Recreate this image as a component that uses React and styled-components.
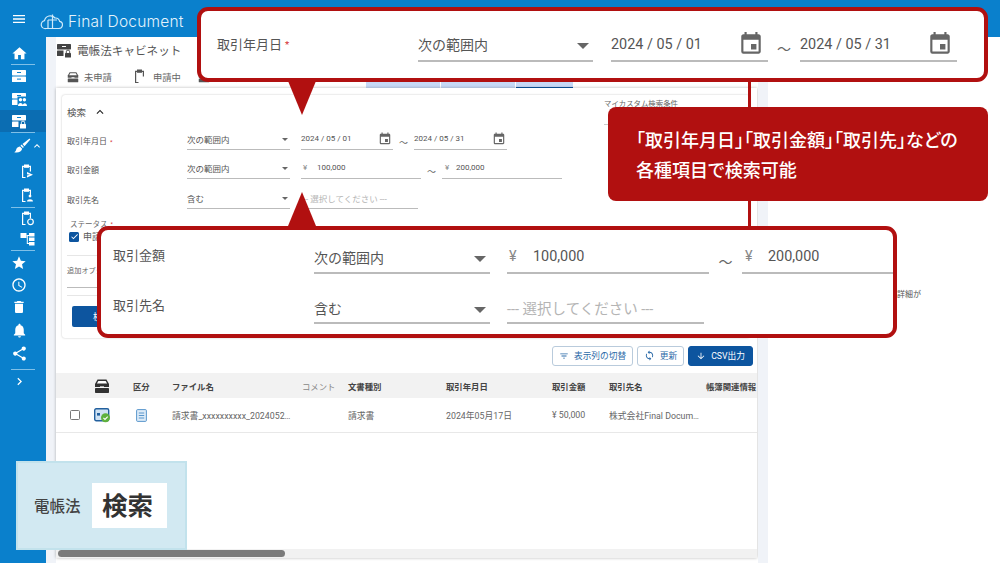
import React from 'react';
import styled, { createGlobalStyle } from 'styled-components';
import {
  MdHome, MdStar, MdAccessTime, MdDelete, MdNotifications, MdShare, MdChevronRight,
  MdKeyboardArrowUp, MdExpandLess, MdMenu, MdFilterList, MdSync, MdArrowDownward, MdCheck, MdEvent,
} from 'react-icons/md';

const RED = '#b11010';
const BLUE = '#0a80cc';
const NAVY = '#0d559f';
const FONT = '"Roboto", "Noto Sans CJK JP", sans-serif';

const GlobalStyle = createGlobalStyle`
  html, body { margin: 0; padding: 0; background: #fff; }
  body { font-family: ${FONT}; color: #444; }
  * { box-sizing: border-box; }
`;

const Page = styled.div`
  position: relative;
  width: 1000px;
  height: 563px;
  overflow: hidden;
  background: #fff;
  display: flex;
  flex-direction: column;
`;

const Header = styled.header`
  height: 37px;
  flex: none;
  background: ${BLUE};
  display: flex;
  align-items: center;
  color: #fff;
  padding-left: 11px;
`;

const Logo = styled.div`
  display: flex;
  align-items: center;
  margin: 5px 0 0 13px;
  gap: 4px;
  color: #e4f3fc;
  font-family: "Inter", sans-serif;
  font-weight: 300;
  font-size: 15.5px;
  letter-spacing: 0.2px;
`;

const Body = styled.div`
  flex: 1;
  display: flex;
  min-height: 0;
`;

const Sidebar = styled.nav`
  width: 46px;
  flex: none;
  background: ${BLUE};
  display: flex;
  flex-direction: column;
  padding-top: 5px;
  color: #fff;
`;

const NavItem = styled.div`
  height: ${p => p.$h || 22}px;
  flex: none;
  display: flex;
  align-items: center;
  justify-content: center;
  padding-left: ${p => p.$indent || 0}px;
  padding-right: ${p => (p.$indent ? 0 : 8)}px;
  background: ${p => (p.$active ? '#0b6db2' : 'transparent')};
`;

const NavRule = styled.div`
  height: 1px;
  margin: 0 11px;
  flex: none;
  background: #7fc0e8;
`;

const Gutter = styled.div`
  width: ${p => p.$w}px;
  flex: none;
  background: #f0f3f8;
`;

const Main = styled.main`
  width: 702px;
  flex: none;
  display: flex;
  flex-direction: column;
  min-height: 0;
`;

const TitleBar = styled.div`
  height: 28px;
  flex: none;
  display: flex;
  align-items: center;
  gap: 5px;
  padding-bottom: 2px;
  background: #fff;
  color: #555;
  font-size: 11.6px;
`;

const Tabs = styled.div`
  height: 23px;
  flex: none;
  display: flex;
  align-items: flex-end;
  padding-left: 11px;
  background: #fff;
`;

const Tab = styled.div`
  width: ${p => p.$w}px;
  height: ${p => (p.$blank ? 8 : 23)}px;
  flex: none;
  display: flex;
  align-items: center;
  gap: 5px;
  font-size: 9.3px;
  color: #666;
  margin-right: ${p => (p.$blank ? 1 : 0)}px;
  background: ${p => (p.$blank ? '#c7d9f6' : 'transparent')};
  border-bottom: ${p => (p.$selected ? `1px solid ${NAVY}` : 'none')};
`;

const Card = styled.section`
  flex: 1;
  width: 701px;
  min-height: 0;
  margin-bottom: 5px;
  background: #fff;
  box-shadow: 0 0 3px rgba(0, 0, 0, 0.28);
  display: flex;
  flex-direction: column;
  padding-top: 7px;
`;

const Panel = styled.div`
  margin: 0 7px 0 6px;
  height: 243px;
  flex: none;
  border-radius: 3px;
  box-shadow: 0 0 2px rgba(0, 0, 0, 0.25);
  padding: 8px 5px 0;
  display: flex;
  flex-direction: column;
`;

const PanelHead = styled.div`
  height: 17px;
  flex: none;
  display: flex;
  align-items: flex-start;
  justify-content: space-between;
`;

const PanelTitle = styled.div`
  display: flex;
  align-items: center;
  gap: 7px;
  font-size: 9.5px;
  margin-top: 2px;
  color: #555;
`;

const CustomTitle = styled.div`
  width: 141px;
  height: 28px;
  margin-top: -6px;
  font-size: 7.4px;
  color: #666;
  border-bottom: 1px solid #ccc;
`;

const FilterRow = styled.div`
  height: ${p => p.$h}px;
  flex: none;
  display: flex;
  align-items: flex-end;
`;

const RowLabel = styled.div`
  width: ${p => p.$w}px;
  flex: none;
  font-size: ${p => p.$size}px;
  line-height: 1.2;
  padding-left: ${p => p.$pl || 0}px;
  padding-bottom: ${p => p.$pb || 3}px;
  color: #555;
`;

const Required = styled.span`
  color: #d32f2f;
  margin-left: 3px;
  font-size: 0.75em;
  vertical-align: 0.15em;
`;

const Field = styled.div`
  width: ${p => p.$w}px;
  height: ${p => p.$h}px;
  margin-left: ${p => p.$ml || 0}px;
  padding-bottom: ${p => p.$pb || 0}px;
  flex: none;
  display: flex;
  align-items: center;
  justify-content: space-between;
  border-bottom: ${p => p.$line}px solid #bbb;
  font-size: ${p => p.$size}px;
  color: ${p => (p.$muted ? '#b4b4b4' : '#555')};
`;

const CalIcon = styled(MdEvent)`
  flex: none;
  color: #666;
  margin-right: ${p => p.$mr}px;
`;

const Yen = styled.span`
  width: ${p => p.$w}px;
  flex: none;
  padding-left: ${p => p.$pad}px;
  color: #888;
`;

const Amount = styled.span`
  flex: 1;
`;

const Caret = styled.span`
  flex: none;
  margin: ${p => p.$s * 0.8}px ${p => p.$s * 0.6}px 0 0;
  border-left: ${p => p.$s}px solid transparent;
  border-right: ${p => p.$s}px solid transparent;
  border-top: ${p => p.$s}px solid #666;
`;

const Tilde = styled.span`
  width: ${p => p.$w}px;
  flex: none;
  text-align: center;
  font-size: ${p => p.$size}px;
  line-height: 1.2;
  color: #666;
  padding-bottom: ${p => p.$pb}px;
`;

const StatusLabel = styled.div`
  margin: 9px 0 0 3px;
  font-size: 7.5px;
  color: #666;
`;

const StatusRow = styled.div`
  display: flex;
  align-items: center;
  gap: 4px;
  margin: 1px 0 0 2px;
  font-size: 9px;
  color: #555;
`;

const CheckBox = styled.span`
  width: 10px;
  height: 10px;
  flex: none;
  border-radius: 1.5px;
  background: ${p => (p.$on ? NAVY : '#fff')};
  border: ${p => (p.$on ? 'none' : '1.5px solid #777')};
  color: #fff;
  display: flex;
  align-items: center;
  justify-content: center;
`;

const Divider = styled.div`
  height: 1px;
  flex: none;
  background: #e6e6e6;
  margin-top: ${p => p.$mt}px;
`;

const OptionLabel = styled.div`
  margin-top: 9px;
  font-size: 7.2px;
  color: #666;
`;

const OptionInput = styled.div`
  width: 90px;
  height: 13px;
  flex: none;
  border-bottom: 1px solid #bbb;
`;

const SearchButton = styled.button`
  width: 60px;
  height: 21px;
  flex: none;
  margin: 10px 0 0 5px;
  border: none;
  border-radius: 2px;
  background: ${NAVY};
  color: #fff;
  font: 9px ${FONT};
`;

const Toolbar = styled.div`
  height: 35px;
  flex: none;
  display: flex;
  align-items: center;
  justify-content: flex-end;
  gap: 4px;
  padding: 0 4px 0 0;
`;

const ToolButton = styled.button`
  width: ${p => p.$w}px;
  height: 20px;
  display: flex;
  align-items: center;
  justify-content: center;
  gap: 5px;
  border-radius: 3px;
  border: 1px solid ${p => (p.$solid ? NAVY : '#b9cbdc')};
  background: ${p => (p.$solid ? NAVY : '#fff')};
  color: ${p => (p.$solid ? '#fff' : '#2b6aa8')};
  font: 8.7px ${FONT};
  padding: 0;
`;

const TableRow = styled.div`
  height: ${p => (p.$head ? 25 : 35)}px;
  flex: none;
  display: grid;
  grid-template-columns: 38px 39px 39px 130px 46px 98px 106px 57px 97px 51px;
  align-items: center;
  font-size: ${p => (p.$head ? 8.4 : 8.8)}px;
  white-space: nowrap;
  color: ${p => (p.$head ? '#444' : '#666')};
  font-weight: ${p => (p.$head ? 700 : 400)};
  background: ${p => (p.$head ? '#f2f2f2' : '#fff')};
  border-bottom: ${p => (p.$head ? 'none' : '1px solid #e8e8e8')};
`;

const Cell = styled.div`
  display: flex;
  align-items: center;
  padding-left: ${p => p.$pad || 0}px;
  font-weight: ${p => (p.$light ? 400 : 'inherit')};
  color: ${p => (p.$light ? '#888' : 'inherit')};
`;

const ScrollTrack = styled.div`
  height: 9px;
  margin-top: auto;
  flex: none;
  background: #f1f1f1;
  display: flex;
  align-items: center;
  padding-left: 2px;
`;

const ScrollThumb = styled.div`
  width: 227px;
  height: 7px;
  border-radius: 4px;
  background: #7b7b7b;
`;

const SidePane = styled.aside`
  flex: 1;
  background: #fff;
  font-size: 8px;
  color: #555;
  padding: 251px 0 0 129px;
`;

const Frame = styled.div`
  position: absolute;
  left: ${p => p.$left}px;
  top: ${p => p.$top}px;
  width: ${p => p.$w}px;
  height: ${p => p.$h}px;
  border: 4px solid ${RED};
  border-radius: 11px;
  background: #fff;
  overflow: hidden;
  display: flex;
  flex-direction: column;
`;

const Pointer = styled.div`
  position: absolute;
  left: 288px;
  top: ${p => p.$top}px;
  border-left: 14px solid transparent;
  border-right: 14px solid transparent;
  ${p => (p.$up ? `border-bottom: 34px solid ${RED};` : `border-top: 34px solid ${RED};`)}
`;

const Connector = styled.div`
  position: absolute;
  left: 748px;
  top: 81px;
  width: 3px;
  height: 146px;
  background: ${RED};
`;

const Note = styled.div`
  position: absolute;
  left: 608px;
  top: 107px;
  width: 380px;
  height: 94px;
  border-radius: 8px;
  background: ${RED};
  color: #fff;
  font-size: 18px;
  font-weight: 500;
  line-height: 30px;
  padding: 17px 0 0 28px;
  font-feature-settings: "palt";
  font-family: "Noto Sans CJK JP", sans-serif;
`;

const Badge = styled.div`
  position: absolute;
  left: 16px;
  top: 461px;
  width: 171px;
  height: 89px;
  background: #d2e9f2;
  border: 2px solid #c2e2ec;
  display: flex;
  align-items: center;
  gap: 11px;
  padding-left: 16px;
`;

const BadgeLabel = styled.div`
  font-size: 15.5px;
  font-weight: 500;
  color: #444;
  padding-bottom: 1px;
  font-family: "Noto Sans CJK JP", sans-serif;
`;

const BadgeWord = styled.div`
  width: 75px;
  height: 45px;
  padding: 0 3px 4px 0;
  background: #fff;
  display: flex;
  align-items: center;
  justify-content: center;
  font-size: 25.5px;
  font-weight: 700;
  color: #333;
  font-family: "Noto Sans CJK JP", sans-serif;
`;

const Cloud = () => (
  <svg width="24" height="20" viewBox="0 0 24 20" fill="none" stroke="#cfeafa" strokeWidth="1.2">
    <path d="M6 17.5h13a3.6 3.6 0 0 0 .7-7.1A4.5 4.5 0 0 0 15 7 6 6 0 0 0 4.5 9.6 4 4 0 0 0 6 17.5z" />
    <path d="M12.5 3.5v14M8 9h9M8 9v8.5" />
  </svg>
);

const Cabinet = ({ size = 16, color = '#fff', lock, people }) => (
  <svg width={size} height={size} viewBox="0 0 16 16" fill={color}>
    <rect x="1" y="2" width="14" height="5.4" rx="0.6" />
    <rect x="1" y="8.6" width="14" height="5.4" rx="0.6" />
    <rect x="6" y="4" width="4" height="1" fill={color === '#fff' ? BLUE : '#fff'} />
    {!lock && !people && <rect x="6" y="10.6" width="4" height="1" fill={BLUE} />}
    {lock && (
      <g>
        <rect x="7.5" y="8" width="8.5" height="8" fill={color === '#fff' ? '#0b6db2' : '#fff'} />
        <rect x="9" y="11" width="6" height="4.4" rx="0.5" />
        <path d="M10.3 11V9.8a1.7 1.7 0 0 1 3.4 0V11" fill="none" stroke={color} strokeWidth="0.9" />
      </g>
    )}
    {people && (
      <g>
        <rect x="6.5" y="5.5" width="9.5" height="10.5" fill={BLUE} />
        <circle cx="9.5" cy="8.8" r="1.7" />
        <circle cx="13.4" cy="8.8" r="1.7" />
        <path d="M7 15c0-4 5-4 5 0zM11.6 15c0-3.6 4.4-3.6 4.4 0z" />
      </g>
    )}
  </svg>
);

const Brush = () => (
  <svg width="18" height="18" viewBox="0 0 18 18" fill="#fff">
    <path d="M16.5 1.5l-7 5.5 2 2.2 5.8-6.6z" />
    <path d="M8.6 7.6l2.3 2.4-1 1.1-2.4-2.4zM7 9.6l2.2 2.2c-.6 2.6-3.8 4.4-8 3.4 2-.6 1.5-2 2.4-3.6.6-1 2-1.8 3.4-2z" />
  </svg>
);

const Clipboard = ({ badge, color = '#fff' }) => (
  <svg width="15" height="15" viewBox="0 0 15 15" fill="none" stroke={color} strokeWidth="1.2">
    <path d="M5.5 13.5H2.6V2.4h7.8v5" />
    <path d="M4.6 1h3.8v2.2H4.6z" fill={color} />
    {badge === 'gear' && <circle cx="10.5" cy="10.8" r="2.8" />}
    {badge === 'user' && <path d="M7 13.5c0-3 6-3 6 0zM10 9.5a1.4 1.4 0 1 0 0-2.8 1.4 1.4 0 0 0 0 2.8z" fill={color} stroke="none" />}
    {badge === 'send' && <path d="M7 13.5l6-2.7-6-2.8v2.2l3 .6-3 .6z" fill={color} stroke="none" />}
  </svg>
);

const TreeIcon = () => (
  <svg width="15" height="14" viewBox="0 0 15 14" fill="#fff">
    <rect x="0.5" y="1" width="6" height="5" />
    <rect x="9" y="1" width="5.5" height="3.5" />
    <rect x="9" y="5.5" width="5.5" height="3.5" />
    <rect x="9" y="10" width="5.5" height="3.5" />
    <path d="M6.5 3h2.5v1H7.8v7H9v1H6.8V4H6.5z" />
  </svg>
);

const Tray = ({ size = 12, color = '#555' }) => (
  <svg width={size} height={size} viewBox="0 0 16 16">
    <path d="M3.5 1.5h9L15 6v3H1V6z" fill={color} />
    <path d="M4.3 3h7.4l1.4 2.6H2.9z" fill="#fff" />
    <rect x="1" y="10" width="14" height="5" rx="0.7" fill={color} />
    <rect x="6" y="8.4" width="4" height="1.2" fill="#fff" />
  </svg>
);

const StatusIcon = () => (
  <svg width="17" height="15" viewBox="0 0 17 15">
    <rect x="0.7" y="0.7" width="14" height="12" rx="1.5" fill="#cfe2f3" stroke="#23609e" strokeWidth="1.4" />
    <rect x="3" y="5" width="3" height="2.6" fill="#23609e" />
    <circle cx="11.5" cy="9.8" r="4.5" fill="#5fb13c" />
    <path d="M9.4 9.8l1.6 1.6 2.7-2.8" stroke="#fff" strokeWidth="1.1" fill="none" />
  </svg>
);

const DocIcon = () => (
  <svg width="11" height="13" viewBox="0 0 11 13" fill="#dcebf8" stroke="#4a8cc6" strokeWidth="0.9">
    <rect x="0.6" y="0.6" width="9.8" height="11.8" rx="1" />
    <path d="M2.8 4h5.4M2.8 6.5h5.4M2.8 9h5.4" fill="none" />
  </svg>
);

const navTop = [
  { key: 'home', h: 22, icon: <MdHome size={17} /> },
  { rule: true },
  { key: 'cabinet', h: 22, icon: <Cabinet /> },
  { key: 'people', h: 23, icon: <Cabinet people /> },
  { key: 'lock', h: 22, active: true, icon: <Cabinet lock /> },
  { rule: true },
];

const navBottom = [
  { key: 'send', h: 24, indent: 9, icon: <Clipboard badge="send" /> },
  { key: 'user', h: 24, indent: 9, icon: <Clipboard badge="user" /> },
  { rule: true },
  { key: 'gear', h: 20, indent: 9, icon: <Clipboard badge="gear" /> },
  { key: 'tree', h: 22, indent: 9, icon: <TreeIcon /> },
  { rule: true },
  { key: 'star', h: 24, icon: <MdStar size={16} /> },
  { key: 'clock', h: 20, icon: <MdAccessTime size={16} /> },
  { key: 'trash', h: 24, icon: <MdDelete size={16} /> },
  { key: 'bell', h: 22, icon: <MdNotifications size={17} /> },
  { key: 'share', h: 24, icon: <MdShare size={17} /> },
  { key: 'gap', h: 4, icon: null },
  { rule: true },
  { key: 'more', h: 22, icon: <MdChevronRight size={15} /> },
];

const renderNav = list => list.map((item, i) => (
  item.rule
    ? <NavRule key={`r${i}`} />
    : <NavItem key={item.key} $h={item.h} $indent={item.indent} $active={item.active}>{item.icon}</NavItem>
));

const columns = [
  { label: '' },
  { label: <Tray size={16} color="#333" /> },
  { label: '区分' },
  { label: 'ファイル名' },
  { label: 'コメント', light: true },
  { label: '文書種別' },
  { label: '取引年月日' },
  { label: '取引金額' },
  { label: '取引先名' },
  { label: '帳簿関連情報' },
];

const App = () => (
  <Page>
    <GlobalStyle />
    <Header>
      <MdMenu size={16} />
      <Logo><Cloud />Final Document</Logo>
    </Header>

    <Body>
      <Sidebar>
        {renderNav(navTop)}
        <NavItem $h={26} $indent={10}>
          <Brush />
          <MdKeyboardArrowUp size={12} />
        </NavItem>
        {renderNav(navBottom)}
      </Sidebar>

      <Gutter $w={10} />

      <Main>
        <TitleBar>
          <Cabinet size={16} color="#444" lock />
          電帳法キャビネット
        </TitleBar>
        <Tabs>
          <Tab $w={66}><Tray />未申請</Tab>
          <Tab $w={65}><Clipboard color="#555" />申請中</Tab>
          <Tab $w={168}><Tray />申請済</Tab>
          <Tab $blank $w={74} />
          <Tab $blank $w={74} />
          <Tab $blank $selected $w={57} />
        </Tabs>

        <Card>
          <Panel>
            <PanelHead>
              <PanelTitle>検索 <MdExpandLess size={14} color="#222" /></PanelTitle>
              <CustomTitle>マイカスタム検索条件</CustomTitle>
            </PanelHead>
            <FilterRow $h={30}>
              <RowLabel $w={120} $size={8}>取引年月日<Required>*</Required></RowLabel>
              <Field $w={103} $h={22} $line={1} $size={8.5}>次の範囲内<Caret $s={3} /></Field>
              <Field $w={92} $h={22} $line={1} $size={8} $ml={11}>
                2024 / 05 / 01<CalIcon size={14} $mr={1} />
              </Field>
              <Tilde $w={21} $size={9} $pb={1}>〜</Tilde>
              <Field $w={93} $h={22} $line={1} $size={8}>
                2024 / 05 / 31<CalIcon size={14} $mr={1} />
              </Field>
            </FilterRow>
            <FilterRow $h={29}>
              <RowLabel $w={120} $size={8}>取引金額</RowLabel>
              <Field $w={103} $h={22} $line={1} $size={8.5}>次の範囲内<Caret $s={3} /></Field>
              <Field $w={120} $h={22} $line={1} $size={8} $ml={11}>
                <Yen $w={16} $pad={2}>¥</Yen><Amount>100,000</Amount>
              </Field>
              <Tilde $w={21} $size={9} $pb={1}>〜</Tilde>
              <Field $w={120} $h={22} $line={1} $size={8}>
                <Yen $w={14} $pad={3}>¥</Yen><Amount>200,000</Amount>
              </Field>
            </FilterRow>
            <FilterRow $h={30}>
              <RowLabel $w={120} $size={8}>取引先名</RowLabel>
              <Field $w={103} $h={22} $line={1} $size={8.5}>含む<Caret $s={3} /></Field>
              <Field $w={117} $h={22} $line={1} $size={8.5} $muted $ml={11}>--- 選択してください ---</Field>
            </FilterRow>
            <StatusLabel>ステータス<Required>*</Required></StatusLabel>
            <StatusRow><CheckBox $on><MdCheck size={9} /></CheckBox>申請</StatusRow>
            <Divider $mt={12} />
            <OptionLabel>追加オプション</OptionLabel>
            <OptionInput />
            <Divider $mt={7} />
            <SearchButton>検索</SearchButton>
          </Panel>

          <Toolbar>
            <ToolButton $w={81}><MdFilterList size={10} />表示列の切替</ToolButton>
            <ToolButton $w={47}><MdSync size={11} />更新</ToolButton>
            <ToolButton $w={65} $solid><MdArrowDownward size={10} />CSV出力</ToolButton>
          </Toolbar>

          <TableRow $head>
            {columns.map((c, i) => <Cell key={i} $light={c.light}>{c.label}</Cell>)}
          </TableRow>
          <TableRow>
            <Cell $pad={14}><CheckBox /></Cell>
            <Cell><StatusIcon /></Cell>
            <Cell $pad={3}><DocIcon /></Cell>
            <Cell>請求書_xxxxxxxxxx_2024052…</Cell>
            <Cell />
            <Cell>請求書</Cell>
            <Cell>2024年05月17日</Cell>
            <Cell>¥ 50,000</Cell>
            <Cell>株式会社Final Docum…</Cell>
            <Cell />
          </TableRow>

          <ScrollTrack><ScrollThumb /></ScrollTrack>
        </Card>
      </Main>

      <Gutter $w={10} />
      <SidePane>詳細が</SidePane>
    </Body>

    <Connector />
    <Frame $left={197} $top={7} $w={791} $h={75}>
      <FilterRow $h={51}>
        <RowLabel $w={217} $size={13} $pl={16} $pb={9}>取引年月日<Required>*</Required></RowLabel>
        <Field $w={175} $h={34} $line={2} $size={14}>次の範囲内<Caret $s={6} /></Field>
        <Field $w={157} $h={34} $line={2} $size={14.4} $ml={18}>
          2024 / 05 / 01<CalIcon size={26} $mr={4} />
        </Field>
        <Tilde $w={32} $size={14} $pb={4}>〜</Tilde>
        <Field $w={157} $h={34} $line={2} $size={14.4}>
          2024 / 05 / 31<CalIcon size={26} $mr={4} />
        </Field>
      </FilterRow>
    </Frame>
    <Pointer $top={81} />

    <Pointer $up $top={192} />
    <Frame $left={97} $top={226} $w={800} $h={112}>
      <FilterRow $h={44}>
        <RowLabel $w={213} $size={13} $pl={12} $pb={10}>取引金額</RowLabel>
        <Field $w={176} $h={30} $line={2} $size={14} $pb={3}>次の範囲内<Caret $s={6} /></Field>
        <Field $w={202} $h={30} $line={2} $size={14.4} $pb={3} $ml={17}>
          <Yen $w={26} $pad={2}>¥</Yen><Amount>100,000</Amount>
        </Field>
        <Tilde $w={33} $size={14} $pb={3}>〜</Tilde>
        <Field $w={152} $h={30} $line={2} $size={14.4} $pb={3}>
          <Yen $w={26} $pad={3}>¥</Yen><Amount>200,000</Amount>
        </Field>
      </FilterRow>
      <FilterRow $h={50}>
        <RowLabel $w={213} $size={13} $pl={12} $pb={10}>取引先名</RowLabel>
        <Field $w={176} $h={30} $line={2} $size={14} $pb={1}>含む<Caret $s={6} /></Field>
        <Field $w={197} $h={30} $line={2} $size={14.5} $muted $ml={17} $pb={1}>--- 選択してください ---</Field>
      </FilterRow>
    </Frame>

    <Note>
      「取引年月日」「取引金額」「取引先」などの<br />
      各種項目で検索可能
    </Note>

    <Badge>
      <BadgeLabel>電帳法</BadgeLabel>
      <BadgeWord>検索</BadgeWord>
    </Badge>
  </Page>
);

export default App;
